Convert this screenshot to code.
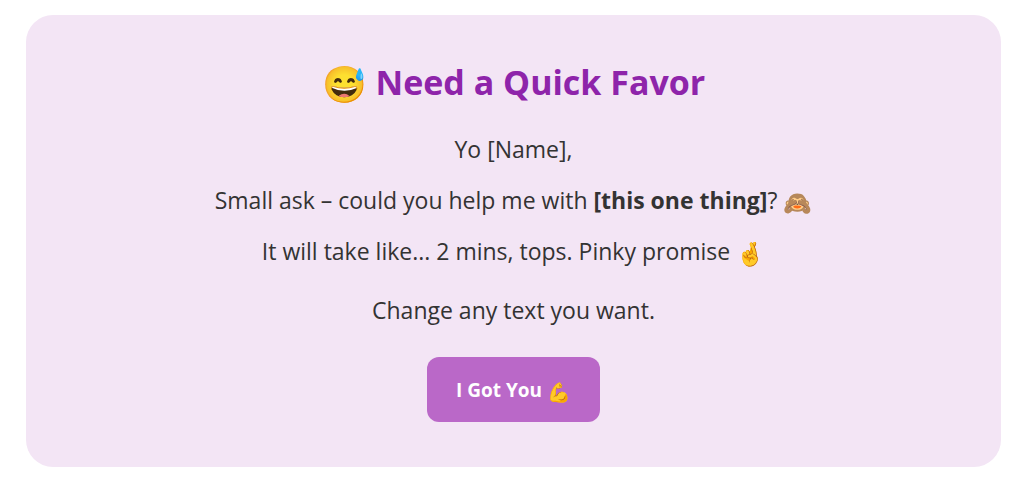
<main>
  <section class="card">
    <h1><span class="emoji">😅</span> Need a Quick Favor</h1>
    <p>Yo [Name],</p>
    <p>Small ask – could you help me with <strong>[this one thing]</strong>? <span class="emoji">🙈</span></p>
    <p>It will take like... 2 mins, tops. Pinky promise <span class="emoji">🤞</span></p>
    <p class="note">Change any text you want.</p>
    <button type="button">I Got You <span class="emoji">💪</span></button>
  </section>
</main>

<style>
  :global(body) { margin: 0; background: #fff; }
  main { padding: 15px 28px 14px 26px; font-family: "Segoe UI", "Open Sans", "Noto Sans", sans-serif; color: #333; }
  .card { display: flex; flex-direction: column; align-items: center; box-sizing: border-box; padding: 41px 24px 45px; border-radius: 27px; background: #f3e5f5; text-align: center; }
  h1 { margin: 0 0 24px; color: #8e24aa; font-size: 34px; line-height: 52px; font-weight: 700; }
  p { margin: 0 0 16px; font-size: 23px; line-height: 35px; }
  .emoji { font-size: 23px; line-height: 1; vertical-align: -2px; }
  h1 .emoji { font-size: 36px; }
  button .emoji { font-size: 19px; }
  .note { margin: 8px 0 29px; }
  button { border: 0; border-radius: 12px; padding: 17px 29px 15px; background: #ba68c8; color: #fff; font: inherit; font-size: 19px; line-height: 33px; font-weight: 700; cursor: pointer; }
</style>
